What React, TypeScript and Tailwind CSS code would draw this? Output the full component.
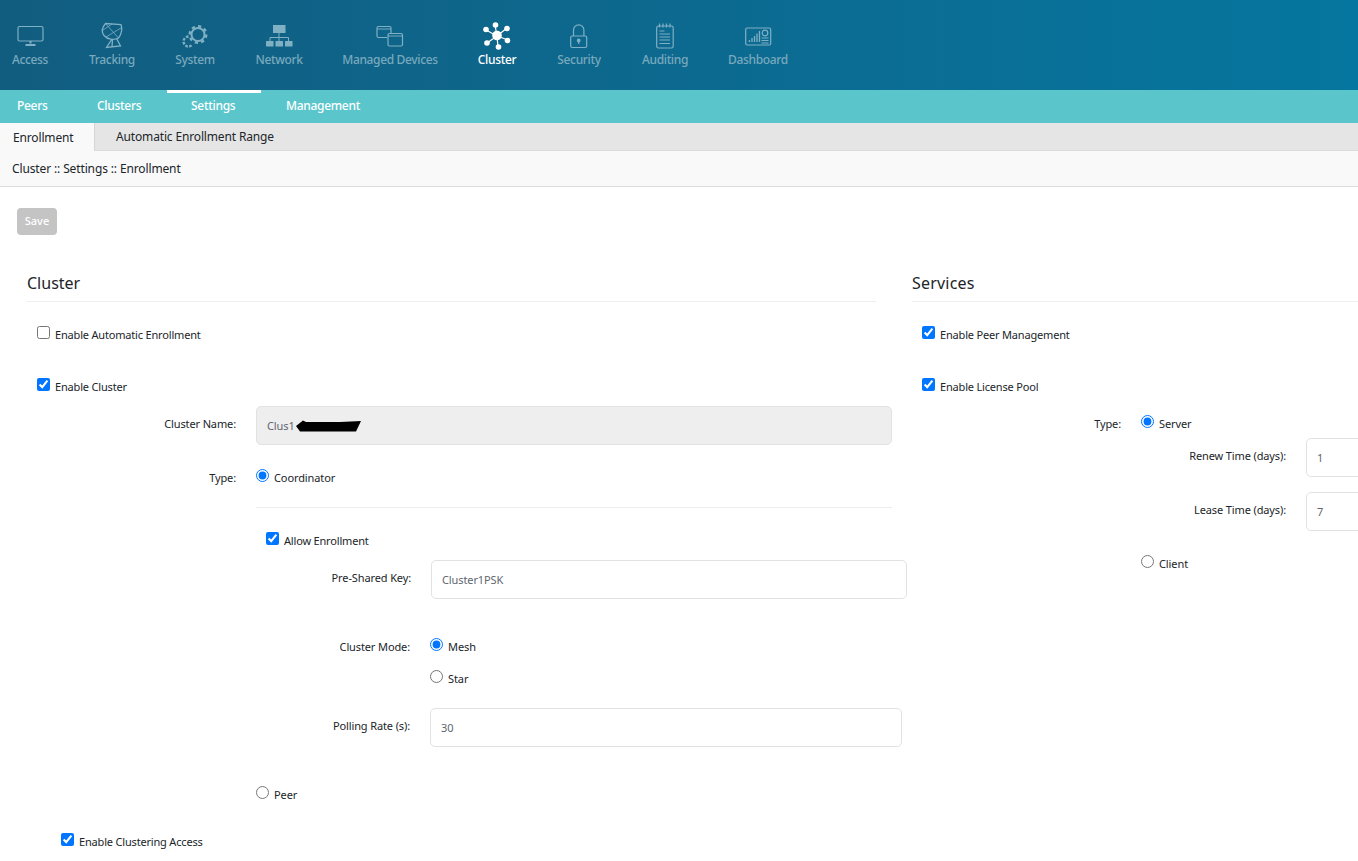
import React from "react";

const font = { fontFamily: '"Noto Sans", "Open Sans", sans-serif' };

function Check({ x, y, label, checked, lx }: { x: number; y: number; label: string; checked?: boolean; lx?: number }) {
  return (
    <>
      <input type="checkbox" defaultChecked={checked} className="absolute m-0 w-[13px] h-[13px] accent-[#0075ff]" style={{ left: x, top: y }} />
      <span className="absolute text-[11px] leading-[16px] text-[#212529] whitespace-nowrap tracking-[-0.18px]" style={{ left: lx ?? x + 18, top: y + 1 }}>{label}</span>
    </>
  );
}

function Radio({ x, y, label, checked }: { x: number; y: number; label: string; checked?: boolean }) {
  return (
    <>
      <input type="radio" defaultChecked={checked} className="absolute m-0 w-[13px] h-[13px] accent-[#0075ff]" style={{ left: x, top: y }} />
      <span className="absolute text-[11px] leading-[16px] text-[#212529] whitespace-nowrap tracking-[-0.1px]" style={{ left: x + 18, top: y + 1 }}>{label}</span>
    </>
  );
}

function Label({ right, y, children }: { right: number; y: number; children: React.ReactNode }) {
  return (
    <span className="absolute text-[11px] leading-[16px] text-[#212529] whitespace-nowrap text-right tracking-[-0.12px]" style={{ right: 1358 - right, top: y }}>{children}</span>
  );
}

function Field({ x, y, w, value, disabled }: { x: number; y: number; w: number; value: string; disabled?: boolean }) {
  return (
    <div className={`absolute h-[39px] rounded-[5px] border border-[#e2e2e2] flex items-center pl-[10px] pt-[2px] text-[11px] text-[#5f6670] tracking-[-0.1px] ${disabled ? "bg-[#eeeeee]" : "bg-white"}`} style={{ left: x, top: y, width: w }}>
      {value}
    </div>
  );
}

const inactive = "#7fb0c4";

function NavItem({ cx, label, active }: { cx: number; label: string; active?: boolean }) {
  return (
    <span className={`absolute top-[51px] -translate-x-1/2 text-[12px] leading-[18px] font-medium tracking-[-0.35px] whitespace-nowrap ${active ? "text-white" : "text-[#79a9bd]"}`} style={{ left: cx }}>{label}</span>
  );
}

function Icon({ x, y, w, h, children }: { x: number; y: number; w: number; h: number; children: React.ReactNode }) {
  return (
    <svg className="absolute" style={{ left: x, top: y }} width={w} height={h} viewBox={`${x} ${y} ${w} ${h}`} fill="none" stroke={inactive} strokeWidth="1.2">
      {children}
    </svg>
  );
}

export default function App() {
  return (
    <div className="relative w-[1358px] h-[861px] overflow-hidden bg-white" style={font}>
      {/* Top navigation */}
      <div className="absolute left-0 top-0 w-full h-[90px] bg-gradient-to-r from-[#115d80] to-[#05769f]">
        <Icon x={15} y={24} w={30} h={24}>
          <rect x="18" y="26.500" width="25" height="14.500" rx="1.500" />
          <path d="M30.500 41v2.500M25.500 45h10" strokeWidth="2" />
        </Icon>
        <Icon x={99} y={21} w={28} h={29}>
          <path d="M105.500 23.500 C102 27.500 101.500 32 104 35.500 C107.500 39.500 113.500 40.500 118.500 38 C121.500 34 122.500 29 121 24.500 L105.500 23.500Z" strokeWidth="1.300" />
          <path d="M105.500 23.500 L118.500 38 M103 30 L112 24 M106 37 L121 28" strokeWidth="0.800" />
          <path d="M112 39 L106.500 47.500 L120.500 46 L116.500 38.500 M112 47 L112.500 39.500" strokeWidth="1.300" />
        </Icon>
        <svg className="absolute left-[180px] top-[22px]" width="30" height="28" viewBox="180 22 30 28" fill="none" stroke={inactive}>
          <circle cx="198" cy="34.500" r="6.500" strokeWidth="2" />
          <circle cx="198" cy="34.500" r="8.300" strokeWidth="2.400" pathLength={8} strokeDasharray="0.5 0.5" />
          <path d="M188.500 36.500 A5.500 5.500 0 0 0 183.500 41 A5.500 5.500 0 0 0 187.500 46.500 A5.500 5.500 0 0 0 192 45" strokeWidth="2.400" strokeDasharray="2.600 1.400" />
        </svg>
        <svg className="absolute left-[264px] top-[23px]" width="30" height="26" viewBox="264 23 30 26" fill="none">
          <rect x="273" y="25" width="12.500" height="8" fill={inactive} />
          <path d="M279 33v4M270 41v-3.500h18.500V41M279 37v4" stroke={inactive} strokeWidth="1" />
          <rect x="266" y="41" width="7.500" height="5.500" rx="0.500" fill={inactive} />
          <rect x="275.500" y="41" width="7.500" height="5.500" rx="0.500" fill={inactive} />
          <rect x="285" y="41" width="7.500" height="5.500" rx="0.500" fill={inactive} />
        </svg>
        <Icon x={375} y={24} w={30} h={24}>
          <path d="M387 37.500h-8.500a1.500 1.500 0 0 1-1.500-1.500v-8a1.500 1.500 0 0 1 1.500-1.500h11a1.500 1.500 0 0 1 1.500 1.500v5" />
          <path d="M377 29h14" strokeWidth="0.900" />
          <rect x="388" y="33.500" width="14.500" height="12.500" rx="1.500" />
          <path d="M388 36h14.500" strokeWidth="0.900" />
        </Icon>
        <svg className="absolute left-[482px] top-[20px]" width="32" height="32" viewBox="482 20 32 32" fill="#ffffff" stroke="#ffffff">
          <path d="M497 36 L495 25 M497 36 L507 28 M497 36 L508 40 M497 36 L498 47 M497 36 L487 43 M497 36 L486 30" strokeWidth="1.200" />
          <circle cx="497" cy="35.500" r="4.800" stroke="none" />
          <circle cx="495.500" cy="25" r="2.800" stroke="none" />
          <circle cx="507" cy="28.500" r="2.800" stroke="none" />
          <circle cx="507.500" cy="40.500" r="2.800" stroke="none" />
          <circle cx="498.500" cy="47" r="2.800" stroke="none" />
          <circle cx="487" cy="43" r="2.800" stroke="none" />
          <circle cx="486" cy="29.500" r="2.800" stroke="none" />
        </svg>
        <Icon x={567} y={22} w={24} h={28}>
          <rect x="570.700" y="36" width="16" height="11.500" rx="1.500" />
          <path d="M573.500 36v-6a5.200 5.200 0 0 1 10.400 0v6" />
          <circle cx="578.700" cy="40.500" r="1.300" fill={inactive} />
          <path d="M578.700 41v3" />
        </Icon>
        <Icon x={654} y={22} w={24} h={28}>
          <rect x="656.700" y="26" width="16.500" height="22" rx="1.800" />
          <path d="M659.500 23.500v4M663 23.500v4M666.500 23.500v4M670 23.500v4" />
          <path d="M659.500 31h5M659.500 34h10.500M659.500 37h10.500M659.500 40h10.500M659.500 43.500h10.500" />
        </Icon>
        <Icon x={743} y={26} w={30} h={22}>
          <rect x="745.700" y="28" width="25" height="17" rx="1.500" />
          <path d="M749.500 42v-2M752 42v-4M754.500 42v-6M757 42v-8.500M759.500 42v-11" strokeWidth="1.300" />
          <circle cx="765" cy="33" r="2.800" />
          <path d="M761.500 38h7M761.500 40.500h7M761.500 43h7" />
        </Icon>

        <NavItem cx={30} label="Access" />
        <NavItem cx={112} label="Tracking" />
        <NavItem cx={195} label="System" />
        <NavItem cx={279} label="Network" />
        <NavItem cx={390} label="Managed Devices" />
        <NavItem cx={497} label="Cluster" active />
        <NavItem cx={579} label="Security" />
        <NavItem cx={665} label="Auditing" />
        <NavItem cx={758} label="Dashboard" />
      </div>

      {/* Sub navigation */}
      <div className="absolute left-0 top-[90px] w-full h-[33px] bg-[#5ac6cc] text-white text-[12px] font-medium tracking-[-0.3px]">
        <div className="absolute left-[167px] top-0 w-[94px] h-[3px] bg-white" />
        <span className="absolute left-[17px] top-[7px] leading-[18px]">Peers</span>
        <span className="absolute left-[97px] top-[7px] leading-[18px]">Clusters</span>
        <span className="absolute left-[191px] top-[7px] leading-[18px]">Settings</span>
        <span className="absolute left-[286px] top-[7px] leading-[18px]">Management</span>
      </div>

      {/* Tabs */}
      <div className="absolute left-0 top-[123px] w-full h-[28px] bg-[#e5e5e5] border-b border-[#dcdcdc] text-[12px] text-[#212529] tracking-[-0.15px]">
        <div className="absolute left-0 top-0 w-[95px] h-[28px] bg-[#f9f9f9] border-r border-[#d5d5d5] flex items-center pl-[13px] pt-[1px]">Enrollment</div>
        <span className="absolute left-[116px] top-[5px] leading-[18px]">Automatic Enrollment Range</span>
      </div>

      {/* Breadcrumb */}
      <div className="absolute left-0 top-[151px] w-full h-[36px] bg-[#f9f9f9] border-b border-[#dddddd] flex items-center pl-[12px] text-[12px] text-[#212529] tracking-[-0.13px]">
        Cluster :: Settings :: Enrollment
      </div>

      {/* Save */}
      <div className="absolute left-[17px] top-[208px] w-[40px] h-[27px] rounded-[4px] bg-[#c4c4c4] text-white text-[11px] font-medium flex items-center justify-center">Save</div>

      {/* Cluster section */}
      <h2 className="absolute left-[27px] top-[272px] text-[16px] leading-[22px] text-[#212529]">Cluster</h2>
      <div className="absolute left-[27px] top-[301px] w-[849px] h-px bg-[#eeeeee]" />

      <Check x={37} y={326} label="Enable Automatic Enrollment" />
      <Check x={37} y={378} label="Enable Cluster" checked />

      <Label right={236} y={416}>Cluster Name:</Label>
      <Field x={256} y={406} w={636} value="Clus1" disabled />
      <svg className="absolute left-[294px] top-[419px]" width="70" height="15" viewBox="294 419 70 15">
        <path d="M296 426 L303 420.500 L306 422 L340 422 L361 421 L356 431.500 L300 431.500 Z" fill="#000000" />
      </svg>

      <Label right={236} y={470}>Type:</Label>
      <Radio x={256} y={469} label="Coordinator" checked />
      <div className="absolute left-[256px] top-[507px] w-[636px] h-px bg-[#eeeeee]" />

      <Check x={266} y={532} label="Allow Enrollment" checked />
      <Label right={411} y={570}>Pre-Shared Key:</Label>
      <Field x={431} y={560} w={476} value="Cluster1PSK" />

      <Label right={410} y={639}>Cluster Mode:</Label>
      <Radio x={430} y={638} label="Mesh" checked />
      <Radio x={430} y={670} label="Star" />

      <Label right={410} y={718}>Polling Rate (s):</Label>
      <Field x={430} y={708} w={472} value="30" />

      <Radio x={256} y={786} label="Peer" />
      <Check x={61} y={833} label="Enable Clustering Access" checked />

      {/* Services section */}
      <h2 className="absolute left-[912px] top-[272px] text-[16px] leading-[22px] text-[#212529] tracking-[0.2px]">Services</h2>
      <div className="absolute left-[912px] top-[301px] w-[446px] h-px bg-[#eeeeee]" />

      <Check x={922} y={326} label="Enable Peer Management" checked />
      <Check x={922} y={378} label="Enable License Pool" checked />

      <Label right={1121} y={416}>Type:</Label>
      <Radio x={1141} y={415} label="Server" checked />
      <Label right={1286} y={448}>Renew Time (days):</Label>
      <Field x={1306} y={438} w={70} value="1" />
      <Label right={1286} y={502}>Lease Time (days):</Label>
      <Field x={1306} y={492} w={70} value="7" />
      <Radio x={1141} y={555} label="Client" />
    </div>
  );
}
